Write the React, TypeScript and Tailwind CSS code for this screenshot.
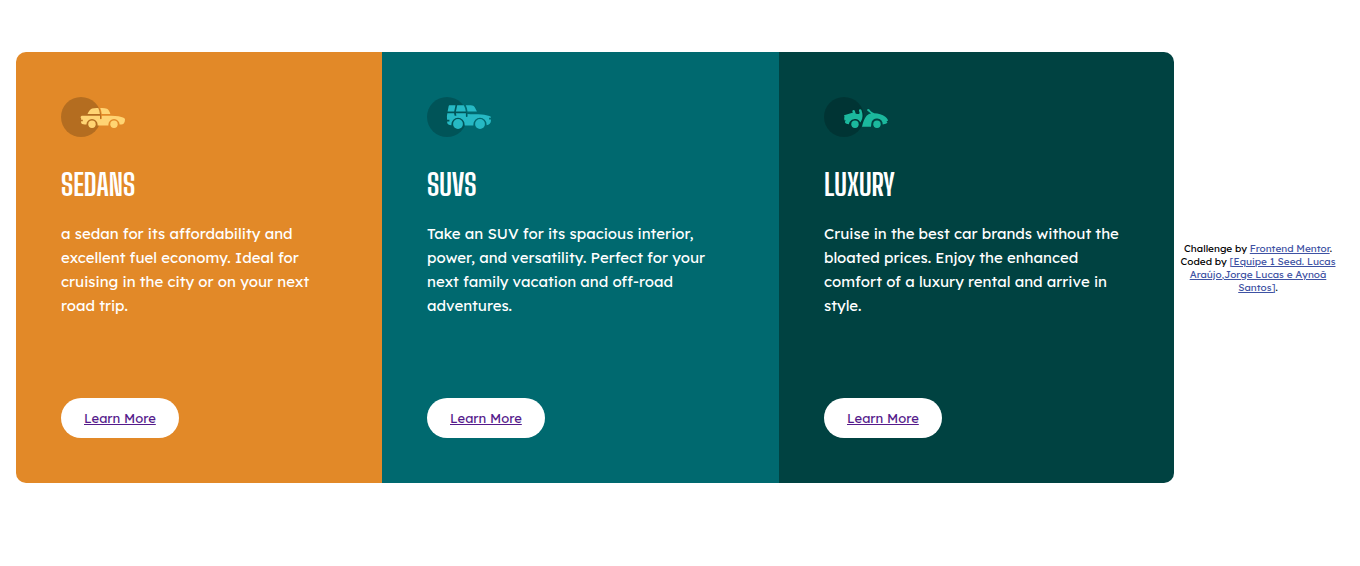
import type { ReactNode } from "react";

function IconFrame({ color, children }: { color: string; children: ReactNode }) {
  return (
    <svg width="64" height="40" viewBox="0 0 64 40" fill={color} aria-hidden="true">
      <circle cx="20" cy="20" r="20" fill="#000" opacity="0.2" />
      {children}
    </svg>
  );
}

function Wheels() {
  return (
    <>
      <circle cx="31" cy="27.2" r="3.7" />
      <circle cx="53" cy="27.2" r="3.7" />
    </>
  );
}

const sedanIcon = (
  <IconFrame color="#ffd473">
    <path d="M26.5 17c1.3-2.7 2.7-4.6 4.6-5.4 1.6-.6 3.7-.7 6.2-.6.9 1.8 1.4 3.8 1.6 6Z" />
    <path d="M39.2 11c2.8-.1 5 0 6.8.7 1.5.8 2.6 2.9 3.4 5.3h-8.7c-.2-2.2-.7-4.2-1.5-6Z" />
    <path d="M20 19.6c0-.5.4-.9.9-.9H39v2.7c0 .5.4.8.9.8s.9-.3.9-.8v-2.7h9.6c5 .1 9.7.8 12.2 2 1 .5 1.4 1.1 1.4 1.9 0 1.4-.3 2.7-1 3.7-.6.8-1.7 1.3-4.4 1.3a5.6 5.6 0 0 0-11.2 0v1H36.6v-1a5.6 5.6 0 0 0-11.2 0c-2.4 0-4.2-.4-4.9-1.1-.5-.6-.5-1.3-.4-2.2h1.7v-1.6h-1.7v-1.5c-.4-.3-.5-.8-.5-1.5Z" />
    <Wheels />
  </IconFrame>
);

const suvIcon = (
  <IconFrame color="#26b9c4">
    <path d="M22.8 8.3h5.7l-1.3 6.2h-6.6l1-5.1c.1-.7.6-1.1 1.2-1.1Z" />
    <path d="M30.2 8.3h6.5c1.2 1.8 1.9 3.9 2.1 6.2h-9.9Z" />
    <path d="M38.8 8.3h5c1.8 0 3.3.8 4.1 2.3l2 3.9h-9.4c-.2-2.3-.8-4.4-1.7-6.2Z" />
    <path d="M20.3 16.3h6.8l.5 2.5h1.8l-.5-2.5h10v3c0 .5.4.8.9.8s.8-.3.8-.8v-2.4c3.7.6 8.7 0 14.3.6 3 .3 6.2.9 8.2 1.7.6.3.9.8.8 1.5h-1.8v1.8h1.8v1.6c0 2-1.8 3.9-4.3 4.1v-.8a6.6 6.6 0 0 0-13.2 0v1h-8.8v-1a6.6 6.6 0 0 0-13.2 0v.8c-2.4 0-4-.9-4.2-2.4v-1.2h2.2v-1.9h-2.3c-.3-2.2-.3-4.4.2-6.4Z" />
    <circle cx="31" cy="27" r="4.9" />
    <circle cx="53" cy="27" r="4.9" />
  </IconFrame>
);

const luxuryIcon = (
  <IconFrame color="#1bb89d">
    <path d="M20 18.2c2.4-.4 4.7-1.3 6.8-1.9.6-.2 1.3-.3 1.9-.3l-.3-1.4c-.1-.8.3-1.4 1-1.5.8-.1 1.3.2 1.5.9l.7 2.4c.9.4 1.7.6 2.6.6.8 0 1.4-.5 1.4-1.3 0-.6-.4-1.1-.6-1.8-.2-.8.2-1.4.9-1.6.8-.1 1.4.2 1.6.9 1.5 4 1.4 7.9-.3 10.9-.3.5-.6 1-.8 1.5a6 6 0 0 0-10.6-.8c-.5.8-.8 1.6-.9 2.5-1.9-.1-3.2-.7-3.9-1.7v-1.2l1-1h-1.4c-.4-1.3-.6-2.4-.1-3.6Z" />
    <path d="M43.5 12.3c.6-.6 1.4-.5 1.9.2 1.2 1.7 2.7 2.9 4.8 3.8 4.1.1 8.2 1.2 11.1 3.4 1.6 1.2 2.6 2.6 2.7 4.1l-1.6.4 1.1 1.1c-.6 1.2-1.8 1.9-4.8 2.1a5.7 5.7 0 0 0-11.4-.6c-.1.8-.1 2-.3 2.9H38c1-4.3 2.4-8.5 4.6-11 1.2-1.2 2.7-1.9 4.5-2.2l-3.3-2.4c-.7-.5-.8-1.2-.3-1.8Z" />
    <Wheels />
  </IconFrame>
);

const cards = [
  {
    title: "SEDANS",
    icon: sedanIcon,
    background: "bg-[#e28928]",
    text: "a sedan for its affordability and excellent fuel economy. Ideal for cruising in the city or on your next road trip.",
  },
  {
    title: "SUVS",
    icon: suvIcon,
    background: "bg-[#00696f]",
    text: "Take an SUV for its spacious interior, power, and versatility. Perfect for your next family vacation and off-road adventures.",
  },
  {
    title: "LUXURY",
    icon: luxuryIcon,
    background: "bg-[#004241]",
    text: "Cruise in the best car brands without the bloated prices. Enjoy the enhanced comfort of a luxury rental and arrive in style.",
  },
];

export default function App() {
  return (
    <div className="flex items-center bg-white px-4 py-13 font-['Lexend_Deca','Inter',sans-serif]">
      <main className="grid min-w-0 flex-1 grid-cols-[366fr_397fr_395fr] overflow-hidden rounded-[10px]">
        {cards.map((card) => (
          <section key={card.title} className={`${card.background} flex flex-col items-start p-[45px] text-white`}>
            {card.icon}
            <h2 className="mt-[27px] font-['Big_Shoulders_Display','Liberation_Sans_Narrow','Roboto',sans-serif] text-[30px] leading-10 font-bold">
              {card.title}
            </h2>
            <p className="mt-[18px] mb-20 text-[15px] leading-6 font-normal">{card.text}</p>
            <a
              href="#"
              className="mt-auto flex h-10 items-center rounded-full bg-white px-[23px] pt-0.5 text-[13px] font-normal text-[#551a8b] underline"
            >
              Learn More
            </a>
          </section>
        ))}
      </main>
      <footer className="w-[170px] pr-1.5 pl-1 text-center text-[10px] leading-[13px] font-normal text-black">
        Challenge by{" "}
        <a href="#" className="text-[#3e52a3] underline">
          Frontend Mentor
        </a>
        . Coded by{" "}
        <a href="#" className="text-[#3e52a3] underline">
          [Equipe 1 Seed. Lucas Araújo,Jorge Lucas e Aynoã Santos]
        </a>
        .
      </footer>
    </div>
  );
}
